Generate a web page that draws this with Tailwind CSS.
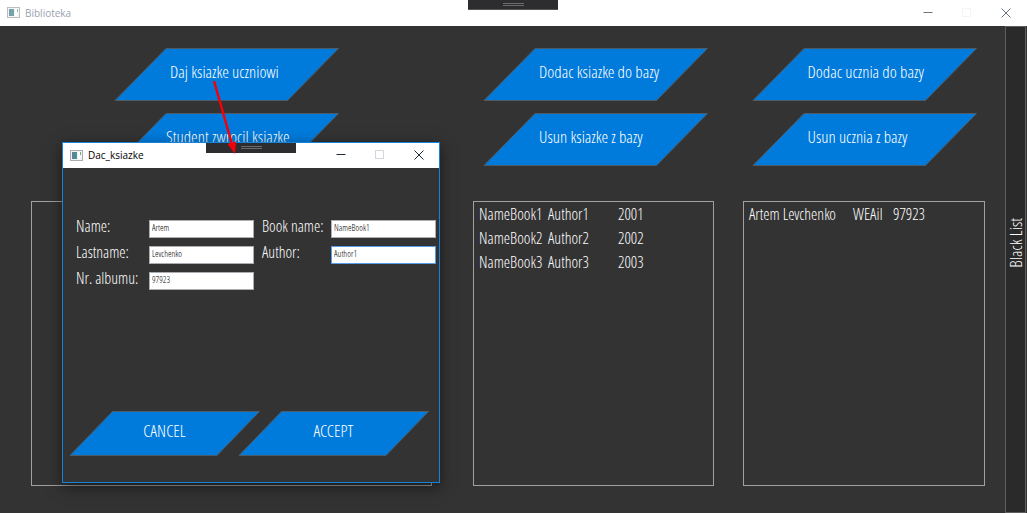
<!DOCTYPE html>
<html lang="pl">
<head>
<meta charset="utf-8">
<title>Biblioteka</title>
<script src="https://cdn.jsdelivr.net/npm/@tailwindcss/browser@4"></script>
</head>
<body class="relative flex h-screen flex-col overflow-hidden bg-[#333333] font-['Open_Sans_Condensed_Light','Roboto_Condensed','Liberation_Sans_Narrow',sans-serif] text-[16px] leading-6 font-light text-white">

<svg class="hidden">
  <symbol id="app" viewBox="0 0 13 11"><rect x=".5" y=".5" width="12" height="10" fill="#f1f3f4" stroke="#a9aeb1"/><rect x="2" y="2" width="5" height="7" fill="#4d8f94"/><rect x="2" y="2" width="2" height="7" fill="#5f7f9b"/><rect x="8" y="2" width="2" height="7" fill="#ffffff"/><rect x="10" y="2" width="1" height="3" fill="#6bb08a"/></symbol>
  <symbol id="min" viewBox="0 0 10 10"><path d="M0.500 4.500H9.500" stroke="currentColor"/></symbol>
  <symbol id="max" viewBox="0 0 10 10"><path d="M.5.5h8v8H.5z" fill="none" stroke="currentColor"/></symbol>
  <symbol id="close" viewBox="0 0 10 10"><path d="M.5.5l9 9m0-9l-9 9" fill="none" stroke="currentColor"/></symbol>
  <symbol id="slab" viewBox="0 0 225 53" preserveAspectRatio="none"><path d="M1 52.500L52 .5H224.500L173.500 52.500z" fill="#007bdc" stroke="#4d5b66"/></symbol>
  <symbol id="slab-small" viewBox="0 0 191 45" preserveAspectRatio="none"><path d="M1 44.500L43.500.5H190.500L148 44.500z" fill="#007bdc" stroke="#4d5b66"/></symbol>
</svg>

<header class="flex h-[26px] shrink-0 items-center bg-white pr-4 pb-px pl-[7px] text-gray-400">
  <svg class="h-[11px] w-[13px] opacity-80"><use href="#app"/></svg>
  <h1 class="ml-[5px] font-['Open_Sans'] text-[10px] font-normal">Biblioteka</h1>
  <div class="ml-auto flex gap-[29px]">
    <button aria-label="Minimalizuj"><svg class="size-[10px] text-gray-500"><use href="#min"/></svg></button>
    <button aria-label="Maksymalizuj" disabled><svg class="size-[10px] text-gray-100"><use href="#max"/></svg></button>
    <button aria-label="Zamknij"><svg class="size-[10px] text-gray-500"><use href="#close"/></svg></button>
  </div>
</header>
<div class="absolute top-0 left-[468px] flex h-[10px] w-[90px] justify-center border-b border-[#555] bg-[#2d2d30] pt-[3px]"><span class="h-[3px] w-[21px] border-y border-[#6a6a6c]"></span></div>

<div class="flex min-h-0 flex-1">
  <main class="flex flex-1 pt-[22px] pr-5 pb-[27px] pl-[31px]">
    <section class="flex flex-[401_1_0] flex-col">
      <div class="flex flex-col items-center gap-3 pr-[10px] text-[17px]">
        <button class="relative h-[53px] w-[225px] pb-[6px] pl-14 text-left"><svg class="absolute inset-0 size-full"><use href="#slab"/></svg><span class="relative">Daj ksiazke uczniowi</span></button>
        <button class="relative h-[53px] w-[225px] pb-[6px] pl-[52px] text-left"><svg class="absolute inset-0 size-full"><use href="#slab"/></svg><span class="relative">Student zwrocil ksiazke</span></button>
      </div>
      <div class="mt-[35px] flex-1 border border-[#a0a0a0]"></div>
    </section>
    <section class="ml-[41px] flex flex-[241_1_0] flex-col">
      <div class="flex flex-col items-center gap-3 pl-1 text-[17px]">
        <button class="relative h-[53px] w-[225px] pb-[6px] pl-14 text-left"><svg class="absolute inset-0 size-full"><use href="#slab"/></svg><span class="relative">Dodac ksiazke do bazy</span></button>
        <button class="relative h-[53px] w-[225px] pb-[6px] pl-14 text-left"><svg class="absolute inset-0 size-full"><use href="#slab"/></svg><span class="relative">Usun ksiazke z bazy</span></button>
      </div>
      <div class="mt-[35px] flex-1 border border-[#a0a0a0] px-[5px]">
        <table>
          <tr><td class="w-[69px] p-0">NameBook1</td><td class="w-[70px] p-0">Author1</td><td class="p-0">2001</td></tr>
          <tr><td class="p-0">NameBook2</td><td class="p-0">Author2</td><td class="p-0">2002</td></tr>
          <tr><td class="p-0">NameBook3</td><td class="p-0">Author3</td><td class="p-0">2003</td></tr>
        </table>
      </div>
    </section>
    <section class="ml-[29px] flex flex-[242_1_0] flex-col">
      <div class="flex flex-col items-center gap-3 text-[17px]">
        <button class="relative h-[53px] w-[225px] pb-[6px] pl-14 text-left"><svg class="absolute inset-0 size-full"><use href="#slab"/></svg><span class="relative">Dodac ucznia do bazy</span></button>
        <button class="relative h-[53px] w-[225px] pb-[6px] pl-14 text-left"><svg class="absolute inset-0 size-full"><use href="#slab"/></svg><span class="relative">Usun ucznia z bazy</span></button>
      </div>
      <div class="mt-[35px] flex-1 border border-[#a0a0a0] px-[5px]">
        <table class="whitespace-nowrap">
          <tr><td class="w-[104px] p-0">Artem Levchenko</td><td class="w-10 p-0">WEAiI</td><td class="p-0">97923</td></tr>
        </table>
      </div>
    </section>
  </main>
  <button class="mr-px flex w-[21px] items-center justify-center border border-[#5e5e5e] bg-[#2a2a2a] pb-[54px] text-[17px]"><span class="rotate-180 [writing-mode:vertical-rl]">Black List</span></button>
</div>

<section aria-labelledby="dlg" class="absolute top-[142px] left-[62px] flex h-[341px] w-[378px] flex-col border border-[#1683d8] bg-[#333333] shadow-[0_4px_14px_rgba(0,0,0,0.5)]">
  <header class="flex h-[25px] shrink-0 items-center bg-white pr-[15px] pb-px pl-[7px] text-gray-800">
    <svg class="h-[11px] w-[13px]"><use href="#app"/></svg>
    <h2 id="dlg" class="ml-[5px] font-['Open_Sans'] text-[10px] font-normal text-black">Dac_ksiazke</h2>
    <div class="ml-auto flex gap-[29px]">
      <button aria-label="Minimalizuj"><svg class="size-[10px]"><use href="#min"/></svg></button>
      <button aria-label="Maksymalizuj" disabled><svg class="size-[10px] text-gray-300"><use href="#max"/></svg></button>
      <button aria-label="Zamknij"><svg class="size-[10px]"><use href="#close"/></svg></button>
    </div>
  </header>
  <form class="flex flex-1 flex-col justify-between pt-[46px] pb-[26px]">
    <div class="grid grid-cols-[73px_105px_minmax(0,1fr)_105px] items-end gap-y-[2px] pr-[3px] pl-[13px]">
      <label for="n">Name:</label><input id="n" value="Artem" class="h-[18px] min-w-0 border border-[#abadb3] bg-white px-[2px] pb-[3px] text-[9px] text-black">
      <label for="b" class="pl-2 whitespace-nowrap">Book name:</label><input id="b" value="NameBook1" class="h-[18px] min-w-0 border border-[#abadb3] bg-white px-[2px] pb-[3px] text-[9px] text-black">
      <label for="l">Lastname:</label><input id="l" value="Levchenko" class="h-[18px] min-w-0 border border-[#abadb3] bg-white px-[2px] pb-[3px] text-[9px] text-black">
      <label for="a" class="pl-2">Author:</label><input id="a" value="Author1" class="h-[18px] min-w-0 border border-[#569de5] bg-white px-[2px] pb-[3px] text-[9px] text-black">
      <label for="r" class="whitespace-nowrap">Nr. albumu:</label><input id="r" value="97923" class="h-[18px] min-w-0 border border-[#abadb3] bg-white px-[2px] pb-[3px] text-[9px] text-black">
    </div>
    <div class="flex pl-[6px] text-[17px]">
      <button type="button" class="relative h-[45px] w-[191px] pb-[6px]"><svg class="absolute inset-0 size-full"><use href="#slab-small"/></svg><span class="relative">CANCEL</span></button>
      <button type="button" class="relative -ml-[22px] h-[45px] w-[191px] pb-[6px]"><svg class="absolute inset-0 size-full"><use href="#slab-small"/></svg><span class="relative">ACCEPT</span></button>
    </div>
  </form>
  <div class="absolute top-0 left-[143px] flex h-[10px] w-[90px] justify-center bg-[#2d2d30] pt-[3px]"><span class="h-[3px] w-[21px] border-y border-[#6a6a6c]"></span></div>
</section>

<svg class="pointer-events-none absolute top-[78px] left-[210px] h-[78px] w-[28px]" viewBox="0 0 28 78"><path d="M4 3L22 66" stroke="#f30008" stroke-width="2.500"/><path d="M25 76L17.500 66L26 63.500z" fill="#f30008"/></svg>
</body>
</html>
